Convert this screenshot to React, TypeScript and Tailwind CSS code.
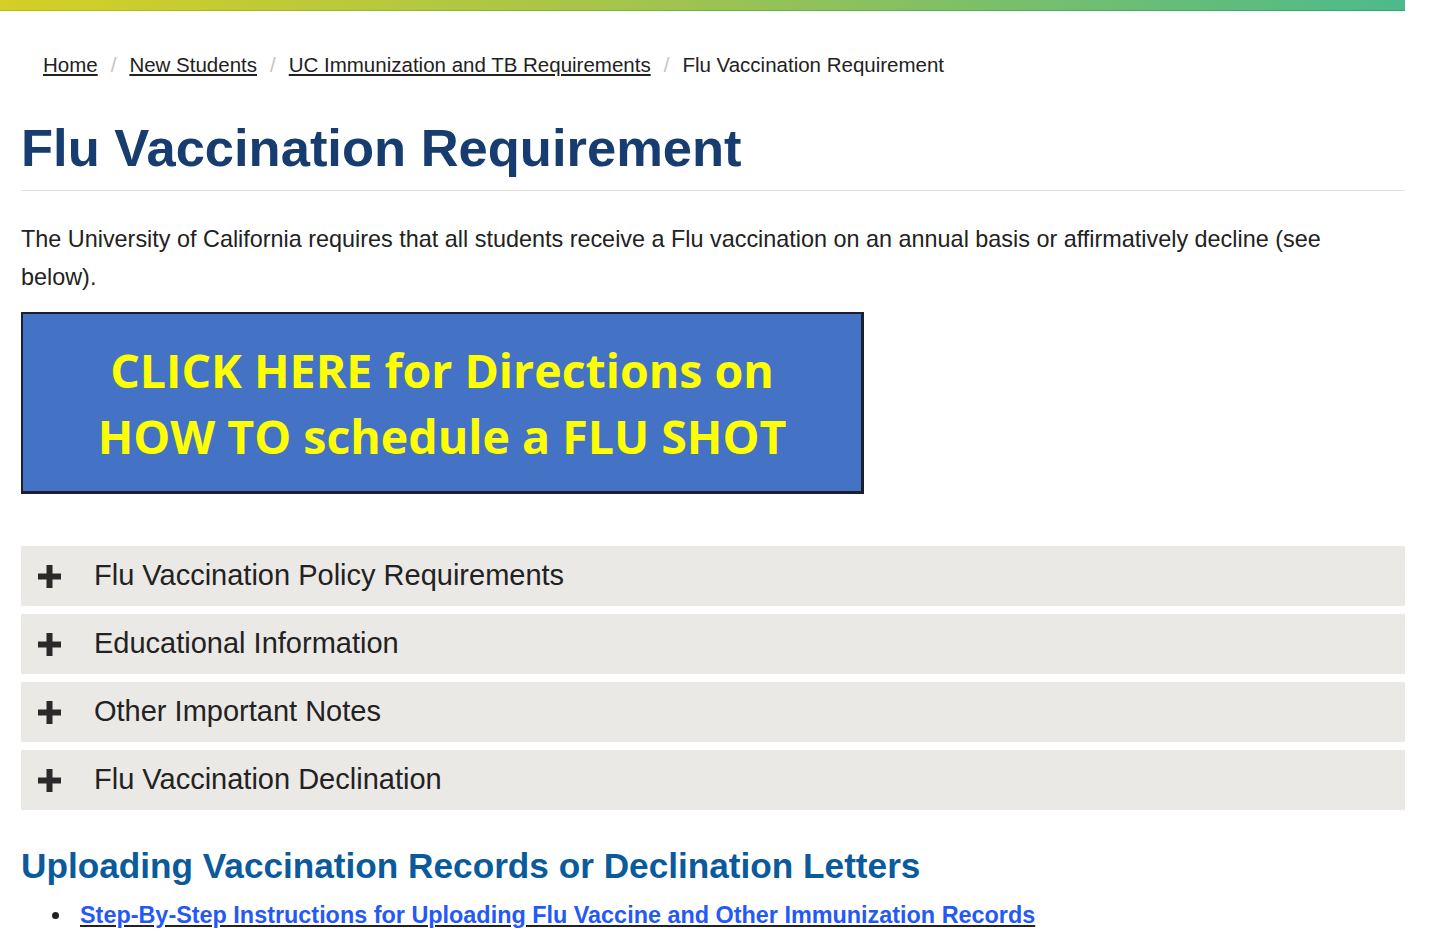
const sections = [
  "Flu Vaccination Policy Requirements",
  "Educational Information",
  "Other Important Notes",
  "Flu Vaccination Declination",
];

function PlusIcon() {
  return (
    <svg width="23" height="23" viewBox="0 0 23 23" className="shrink-0">
      <rect x="8.5" y="0" width="6" height="23" fill="#2a2a2a" />
      <rect x="0" y="8.5" width="23" height="6" fill="#2a2a2a" />
    </svg>
  );
}

export default function App() {
  return (
    <div className="min-h-[951px] w-[1456px] bg-white font-['Liberation_Sans',Arial,sans-serif] text-[#222]">
      {/* top gradient strip */}
      <div className="w-[1405px]">
        <div className="h-[10px] bg-[linear-gradient(90deg,#d5cf26,#a4c44c_45%,#4cba8c)]" />
        <div className="h-[1px] bg-[linear-gradient(90deg,#b5c10a,#6cb63a_50%,#25ab6c)]" />
      </div>

      <main className="w-[1405px] pl-[21px]">
        {/* breadcrumb */}
        <nav className="flex items-center pl-[22px] pt-[42px] text-[20.5px] leading-[24px] text-[#222]">
          <a href="#" className="underline underline-offset-2">Home</a>
          <span className="px-[13px] text-[#c4c4c4]">/</span>
          <a href="#" className="underline underline-offset-2">New Students</a>
          <span className="px-[13px] text-[#c4c4c4]">/</span>
          <a href="#" className="underline underline-offset-2">UC Immunization and TB Requirements</a>
          <span className="px-[13px] text-[#c4c4c4]">/</span>
          <span>Flu Vaccination Requirement</span>
        </nav>

        <h1 className="mt-[38px] border-b border-[#e3e3e3] pb-[9px] text-[52.5px] font-bold leading-[66px] text-[#173c6f]">
          Flu Vaccination Requirement
        </h1>

        <p className="mt-[29px] pr-[60px] text-[23.4px] leading-[38px] text-[#222]">
          The University of California requires that all students receive a Flu vaccination on an annual basis or affirmatively decline (see below).
        </p>

        {/* banner image link */}
        <a
          href="#"
          className="mt-[16px] flex h-[182px] w-[843px] flex-col items-center justify-center border-2 border-b-[3px] border-r-[3px] border-[#1b1f2e] bg-[#4472c4] font-['Open_Sans',sans-serif] text-[46.5px] font-bold leading-[66px] text-[#ffff00]"
        >
          <span>CLICK HERE for Directions on</span>
          <span>HOW TO schedule a FLU SHOT</span>
        </a>

        {/* accordion */}
        <div className="mt-[52px] flex flex-col gap-[8px]">
          {sections.map((s) => (
            <button
              key={s}
              className="flex h-[60px] w-full items-center bg-[#ebe9e6] pl-[17px] text-left"
            >
              <PlusIcon />
              <span className="ml-[33px] text-[29px] text-[#222]">{s}</span>
            </button>
          ))}
        </div>

        <h2 className="mt-[34px] text-[35.2px] font-bold leading-[44px] text-[#0a5a9c]">
          Uploading Vaccination Records or Declination Letters
        </h2>

        <ul className="mt-[12px]">
          <li className="flex items-center">
            <span className="ml-[31px] mr-[21px] h-[7px] w-[7px] rounded-full bg-[#222]" />
            <a
              href="#"
              className="text-[23.4px] font-bold leading-[30px] text-[#2559f5] underline decoration-[#222] underline-offset-2"
            >
              Step-By-Step Instructions for Uploading Flu Vaccine and Other Immunization Records
            </a>
          </li>
        </ul>
      </main>
    </div>
  );
}
